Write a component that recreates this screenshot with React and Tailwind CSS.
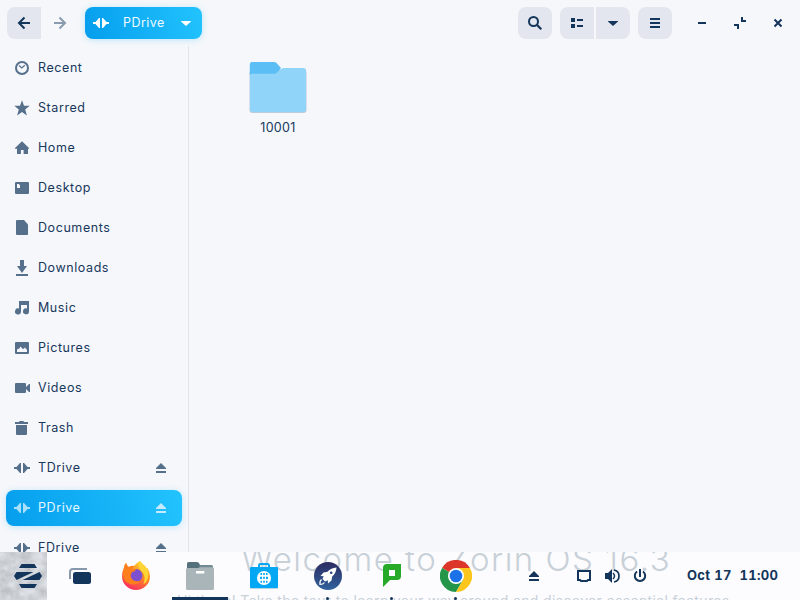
const DRIVE = (
  <path d="M0 7h2.500L6 3h1v10H6L2.500 9H0zM9 3h1l3.500 4H16v2h-2.500L10 13H9z" />
);

const EJECT = <path d="M8 3l5 5v1H3V8zM3 11h10v2H3z" />;

const ICONS = {
  recent: (
    <>
      <circle cx="8" cy="8" r="6" fill="none" stroke="currentColor" strokeWidth="2" />
      <path d="M5 5.500l2.800 2.500 3-2.800" fill="none" stroke="currentColor" strokeWidth="1.200" />
    </>
  ),
  starred: <path d="M8 .3l2 5.500h5.700l-4.500 3.600 1.700 6L8 12l-4.900 3.400 1.700-6L.3 5.800H6z" />,
  home: <path d="M8 1.200L15 8v.7h-1V14H9.600v-4H6.900v4H3V8.700H1V8z" />,
  desktop: (
    <path fillRule="evenodd" d="M2 2h12a1 1 0 0 1 1 1v10a1 1 0 0 1-1 1H2a1 1 0 0 1-1-1V3a1 1 0 0 1 1-1zM3 4v4h3V5.200L4.800 4z" />
  ),
  documents: <path d="M3 0h7l4 4.500V14a1 1 0 0 1-1 1H3a1 1 0 0 1-1-1V1a1 1 0 0 1 1-1z" />,
  downloads: <path d="M6 0h4v6h3l-5 7-5-7h3zM2 14h12v2H2z" />,
  music: <path d="M5 1h10v10.500a3 3 0 1 1-2-3V5H7v6.500a3 3 0 1 1-2-2.900z" />,
  pictures: (
    <path fillRule="evenodd" d="M2 2h12a1 1 0 0 1 1 1v10a1 1 0 0 1-1 1H2a1 1 0 0 1-1-1V3a1 1 0 0 1 1-1zM3 12h10v-2l-2-2.500-2 1.800L6.500 6.500 5 9 4 8.500 3 10z" />
  ),
  videos: <path d="M2 3h9a1 1 0 0 1 1 1v3l3-3h1v8h-1l-3-3v3a1 1 0 0 1-1 1H2a1 1 0 0 1-1-1V4a1 1 0 0 1 1-1z" />,
  trash: <path d="M5.500 1h4l.5 1h4v2H1V2h4zM2 5h11v9a1 1 0 0 1-1 1H3a1 1 0 0 1-1-1z" />,
  drive: DRIVE,
};

function Glyph({ children, size = 16 }) {
  return (
    <svg viewBox="0 0 16 16" width={size} height={size} fill="currentColor" className="shrink-0">
      {children}
    </svg>
  );
}

const PLACES = [
  ["recent", "Recent"],
  ["starred", "Starred"],
  ["home", "Home"],
  ["desktop", "Desktop"],
  ["documents", "Documents"],
  ["downloads", "Downloads"],
  ["music", "Music"],
  ["pictures", "Pictures"],
  ["videos", "Videos"],
  ["trash", "Trash"],
  ["drive", "TDrive"],
  ["drive", "PDrive"],
  ["drive", "FDrive"],
];

const ACCENT =
  "bg-linear-[75deg] from-[#059eed] to-[#22c3fe] shadow-[0_1px_6px_rgba(21,180,240,0.25)]";

function Sidebar() {
  return (
    <nav className="flex w-[189px] shrink-0 flex-col gap-1 border-r border-[#e1e4ec] px-1.5 pt-1">
      {PLACES.map(([icon, label]) => {
        const active = label === "PDrive";
        return (
          <div
            key={label}
            className={`flex h-9 shrink-0 items-center rounded-lg pr-[13px] pl-2 ${active ? ACCENT : ""}`}
          >
            <span className={`flex ${active ? "text-[#a9e0fc]" : "text-[#566f8b]"}`}>
              <Glyph>{ICONS[icon]}</Glyph>
            </span>
            <span className={`ml-2 flex-1 pb-px ${active ? "text-[#e6f7ff]" : "text-[#18385c]"}`}>
              {label}
            </span>
            {icon === "drive" && (
              <span className={`flex ${active ? "text-[#c5eafd]" : "text-[#566f8b]"}`}>
                <Glyph>{EJECT}</Glyph>
              </span>
            )}
          </div>
        );
      })}
    </nav>
  );
}

function Header() {
  return (
    <header className="flex h-[46px] shrink-0 items-center pl-[7px] pr-3.5 text-[#13355b]">
      <div className="flex h-8 w-[34px] items-center justify-center rounded-l-lg bg-[#e3e6ee]">
        <Glyph>
          <path d="M8.500 2.500L3 8l5.500 5.500M3 8h11" fill="none" stroke="currentColor" strokeWidth="2" />
        </Glyph>
      </div>
      <div className="flex h-8 w-[38px] items-center justify-center text-[#8b9bae]">
        <Glyph>
          <path d="M7.500 2.500L13 8l-5.500 5.500M13 8H2" fill="none" stroke="currentColor" strokeWidth="2" />
        </Glyph>
      </div>
      <div className={`ml-1.5 flex h-8 w-[117px] items-center rounded-lg pl-2 text-white ${ACCENT}`}>
        <Glyph>{DRIVE}</Glyph>
        <span className="ml-3.5 flex-1 pb-px tracking-[0.450px] text-[#eefaff]">PDrive</span>
        <span className="mr-2 flex">
          <Glyph>
            <path d="M3 6h10v.5L8 11 3 6.500z" />
          </Glyph>
        </span>
      </div>
      <div className="flex-1" />
      <div className="flex h-8 w-[34px] items-center justify-center rounded-lg bg-[#e3e6ee]">
        <Glyph>
          <circle cx="6.500" cy="6.500" r="4.500" fill="none" stroke="currentColor" strokeWidth="2" />
          <path d="M9.800 9.800l4.500 4.500" stroke="currentColor" strokeWidth="2.200" />
        </Glyph>
      </div>
      <div className="ml-2 flex h-8 w-[34px] items-center justify-center rounded-l-lg bg-[#e3e6ee]">
        <Glyph>
          <path d="M2 3h4v4H2zM2 9h4v4H2zM8 4h6v2H8zM8 10h6v2H8z" />
        </Glyph>
      </div>
      <div className="ml-0.5 flex h-8 w-[34px] items-center justify-center rounded-r-lg bg-[#e3e6ee]">
        <Glyph>
          <path d="M3 6h10v.5L8 11 3 6.500z" />
        </Glyph>
      </div>
      <div className="ml-2 mr-[22px] flex h-8 w-[34px] items-center justify-center rounded-lg bg-[#e3e6ee]">
        <Glyph>
          <path d="M3 3h10v2H3zM3 7h10v2H3zM3 11h10v2H3z" />
        </Glyph>
      </div>
      <div className="flex items-center gap-[22px]">
        <Glyph>
          <path d="M4 7h8v2H4z" />
        </Glyph>
        <Glyph>
          <path d="M9 2h2v3h3v2H9zM2 9h5v5H5v-3H2z" />
        </Glyph>
        <Glyph>
          <path d="M4.500 4.500l7 7M11.500 4.500l-7 7" stroke="currentColor" strokeWidth="2" />
        </Glyph>
      </div>
    </header>
  );
}

function Folder() {
  return (
    <div className="flex w-[178px] flex-col items-center pt-4">
      <svg width="58" height="51" viewBox="0 0 58 52" preserveAspectRatio="none">
        <rect x=".5" y="8" width="57" height="44" rx="2.500" fill="#bccbdc" />
        <path d="M3 0h22q1.500 0 2.500 1l4.500 5-5 7H.8V2.500Q.8 0 3 0z" fill="#5bbff5" />
        <path d="M3.500 12h21q2 0 3.500-1.200l4.200-3.600Q33.500 6 35 6h19.500q2.500 0 2.500 2.500V48q0 3-2.700 3H3.700Q1 51 1 48V14.500Q1 12 3.500 12z" fill="#90d5f9" />
      </svg>
      <span className="mt-[5px] tracking-[0.350px] text-[#18385c]">10001</span>
    </div>
  );
}

function StartButton() {
  return (
    <div className="relative flex h-12 w-[47px] shrink-0 items-center justify-end overflow-hidden bg-[#cdd2d8]">
      <svg className="absolute inset-0" width="47" height="48">
        <filter id="rock" x="0" y="0" width="100%" height="100%" colorInterpolationFilters="sRGB">
          <feTurbulence type="fractalNoise" baseFrequency="0.09 0.11" numOctaves="4" seed="4" />
          <feColorMatrix values="0.22 0 0 0 0.700  0.22 0 0 0 0.715  0.22 0 0 0 0.735  0 0 0 0 1" />
        </filter>
        <rect width="47" height="48" filter="url(#rock)" />
      </svg>
      <svg className="relative mr-[5px]" width="28" height="24" viewBox="0 0 28 24" fill="#13355b">
        <path d="M7.500 0h13L23 4H5zM5 20h18l-2.500 4h-13zM2.500 8h17L2.500 16 0 12zM25.500 16h-17L25.500 8l2.500 4z" />
      </svg>
    </div>
  );
}

function AppIcon({ children, marker, width = "w-16" }) {
  return (
    <div className={`relative flex h-12 items-center justify-center ${width}`}>
      <svg width="32" height="32" viewBox="0 0 32 32">
        {children}
      </svg>
      {marker === "bar" && <span className="absolute bottom-0 left-1 h-[3px] w-14 bg-[#13355b]" />}
      {marker === "dot" && <span className="absolute bottom-0 left-[30px] h-[3px] w-[3px] rounded-full bg-[#13355b]" />}
    </div>
  );
}

function Taskbar() {
  return (
    <footer className="relative flex h-12 shrink-0 items-center overflow-hidden bg-[#fcfcfe] text-[#13355b]">
      <div className="absolute top-[-13px] left-[241px] text-[33px] leading-[40px] font-light tracking-[1.480px] whitespace-nowrap text-[#c8d0d8]">
        Welcome to Zorin OS 16.3
      </div>
      <div className="absolute top-[39px] left-[177px] text-[14px] leading-5 tracking-[0.340px] whitespace-nowrap text-[#c8d0d8]">
        Hi there! Take the tour to learn your way around and discover essential features.
      </div>
      <StartButton />
      <div className="relative ml-px flex">
        <AppIcon width="w-14 pl-2">
          <path d="M6 19v-7q0-3 3-3h14" fill="none" stroke="#8798ad" strokeWidth="2" />
          <rect x="8" y="11" width="20" height="14" rx="3.500" fill="#fcfcfe" />
          <rect x="9" y="12" width="18" height="12" rx="2.500" fill="#13355b" />
        </AppIcon>
        <AppIcon>
          <defs>
            <linearGradient id="fx" x1="0.8" y1="0" x2="0.3" y2="1">
              <stop offset="0" stopColor="#ffe03a" />
              <stop offset=".45" stopColor="#ff8a1e" />
              <stop offset="1" stopColor="#fa2c65" />
            </linearGradient>
          </defs>
          <path d="M20 1q2 3 5 5 1 1 1.500 3l1-1q2.500 4 2.500 8.500A14 13.500 0 0 1 2 16.500Q2 11 4 8q0-3 2-5 1 3 3 4 2-1 5-1 2-3 6-5z" fill="url(#fx)" />
          <circle cx="16" cy="15.500" r="6.500" fill="#7d50cf" />
          <path d="M20 1q2 3 5 5 5 5 2.500 13-1 4-4 5 3-8-2-13-5-4-1.500-10z" fill="#ffd536" />
          <path d="M6 3q1 3 3 4 3-2 5-1 0 2-2 3h4q-1 3-4 3-2 3-1 5.500 3 5 9 3.500-2 4-8 3.500Q3 23 3 14q0-4 1-6 0-3 2-5z" fill="#ff7f1c" />
        </AppIcon>
        <AppIcon marker="bar">
          <path d="M4.500 2h8.500q2 0 3 3h11v6H3V4q0-2 1.500-2z" fill="#55727c" />
          <path d="M16 5h11.500q1.500 0 1.500 1.500V9H14z" fill="#708b94" />
          <path d="M3.500 8H14l3-.7h11.500Q30 7.300 30 9v19.500q0 1.500-1.500 1.500h-25Q2 30 2 28.500v-19Q2 8 3.500 8z" fill="#aab5b9" />
          <rect x="12" y="11" width="8.300" height="2.500" rx=".5" fill="#fff" />
        </AppIcon>
        <AppIcon>
          <path d="M11 8V5.500Q11 4 12.500 4h7Q21 4 21 5.500V8" fill="none" stroke="#04a7f4" strokeWidth="2" />
          <rect x="2" y="8" width="28" height="21" rx="1" fill="#bad5e3" />
          <rect x="2" y="7" width="28" height="21" rx="1" fill="#04a7f4" />
          <circle cx="16" cy="18" r="7" fill="#fff" />
          <path d="M12.500 13h1.500v2h-1.500zM15.200 13h1.600v2h-1.600zM18 13h1.500v2H18zM12 16.800h2v2.200h-2zM15.200 16.800h1.600v2.200h-1.600zM18 16.800h2v2.200h-2zM12.500 20.800h1.500v2h-1.500zM15.200 20.800h1.600v2h-1.600zM18 20.800h1.500v2H18z" fill="#04a7f4" />
        </AppIcon>
        <AppIcon marker="dot">
          <defs>
            <linearGradient id="rk" x1="0" y1="0" x2="0" y2="1">
              <stop offset="0" stopColor="#2c2c62" />
              <stop offset="1" stopColor="#31619c" />
            </linearGradient>
          </defs>
          <circle cx="16" cy="16" r="14" fill="url(#rk)" />
          <path d="M24.500 7.500q-5.500.3-9 4.300l-4 .7L8.500 16l3.200.2L10.500 19l2.500 2.500 2.800-1.200.2 3.200 3.500-3 .7-4q4-3.500 4.300-9z" fill="#fff" />
          <circle cx="19.200" cy="12.800" r="1.300" fill="#2d4480" />
          <path d="M9.500 19.500Q7.500 21 8 24.500q3 0 4.500-2" fill="none" stroke="#fff" strokeWidth="1.200" />
        </AppIcon>
        <AppIcon marker="dot">
          <path d="M11 4h14v12q0 4-4 4h-7l-7 7V8q0-4 4-4z" fill="#27aa28" />
          <rect x="13" y="10" width="6" height="6" fill="#fff" />
        </AppIcon>
        <AppIcon marker="dot">
          <path d="M16 16L2.100 8A16 16 0 0 1 29.900 8z" fill="#dc3529" />
          <path d="M16 16L2.100 8A16 16 0 0 0 16 32l7-12z" fill="#24964a" />
          <path d="M16 8h13.900A16 16 0 0 1 16 32l7-12z" fill="#fdc61d" />
          <circle cx="16" cy="16" r="8" fill="#fff" />
          <circle cx="16" cy="16" r="6.300" fill="#1b72e8" />
        </AppIcon>
      </div>
      <div className="relative ml-[38px] flex items-center">
        <span className="mr-[34px] flex"><Glyph>{EJECT}</Glyph></span>
        <span className="mr-3 flex">
          <Glyph>
            <path d="M2 3h12v9h-2l-1 1H5l-1-1H2z" fill="none" stroke="currentColor" strokeWidth="2" />
          </Glyph>
        </span>
        <span className="mr-3 flex">
          <Glyph>
            <path d="M1 5h3l4-4v14l-4-4H1z" />
            <path d="M9 5q3 3 0 6" fill="none" stroke="currentColor" strokeWidth="1.500" />
            <path d="M10 2q5 1 5 6t-5 6" fill="none" stroke="currentColor" strokeWidth="1.700" />
          </Glyph>
        </span>
        <Glyph>
          <path d="M5 3.500a5.200 5.200 0 1 0 6 0M8 1v8" fill="none" stroke="currentColor" strokeWidth="2" />
        </Glyph>
        <span className="ml-[39px] pb-[2px] text-[13px] font-bold tracking-[0.350px] whitespace-pre tabular-nums">Oct 17  11:00</span>
      </div>
    </footer>
  );
}

export default function App() {
  return (
    <div className="flex h-[600px] w-[800px] flex-col overflow-hidden bg-[#f5f7fb] font-['Inter','Noto_Sans',sans-serif] text-[12.5px] leading-5 tracking-[0.580px]">
      <Header />
      <div className="flex min-h-0 flex-1 overflow-hidden">
        <Sidebar />
        <main className="flex-1">
          <Folder />
        </main>
      </div>
      <Taskbar />
    </div>
  );
}
